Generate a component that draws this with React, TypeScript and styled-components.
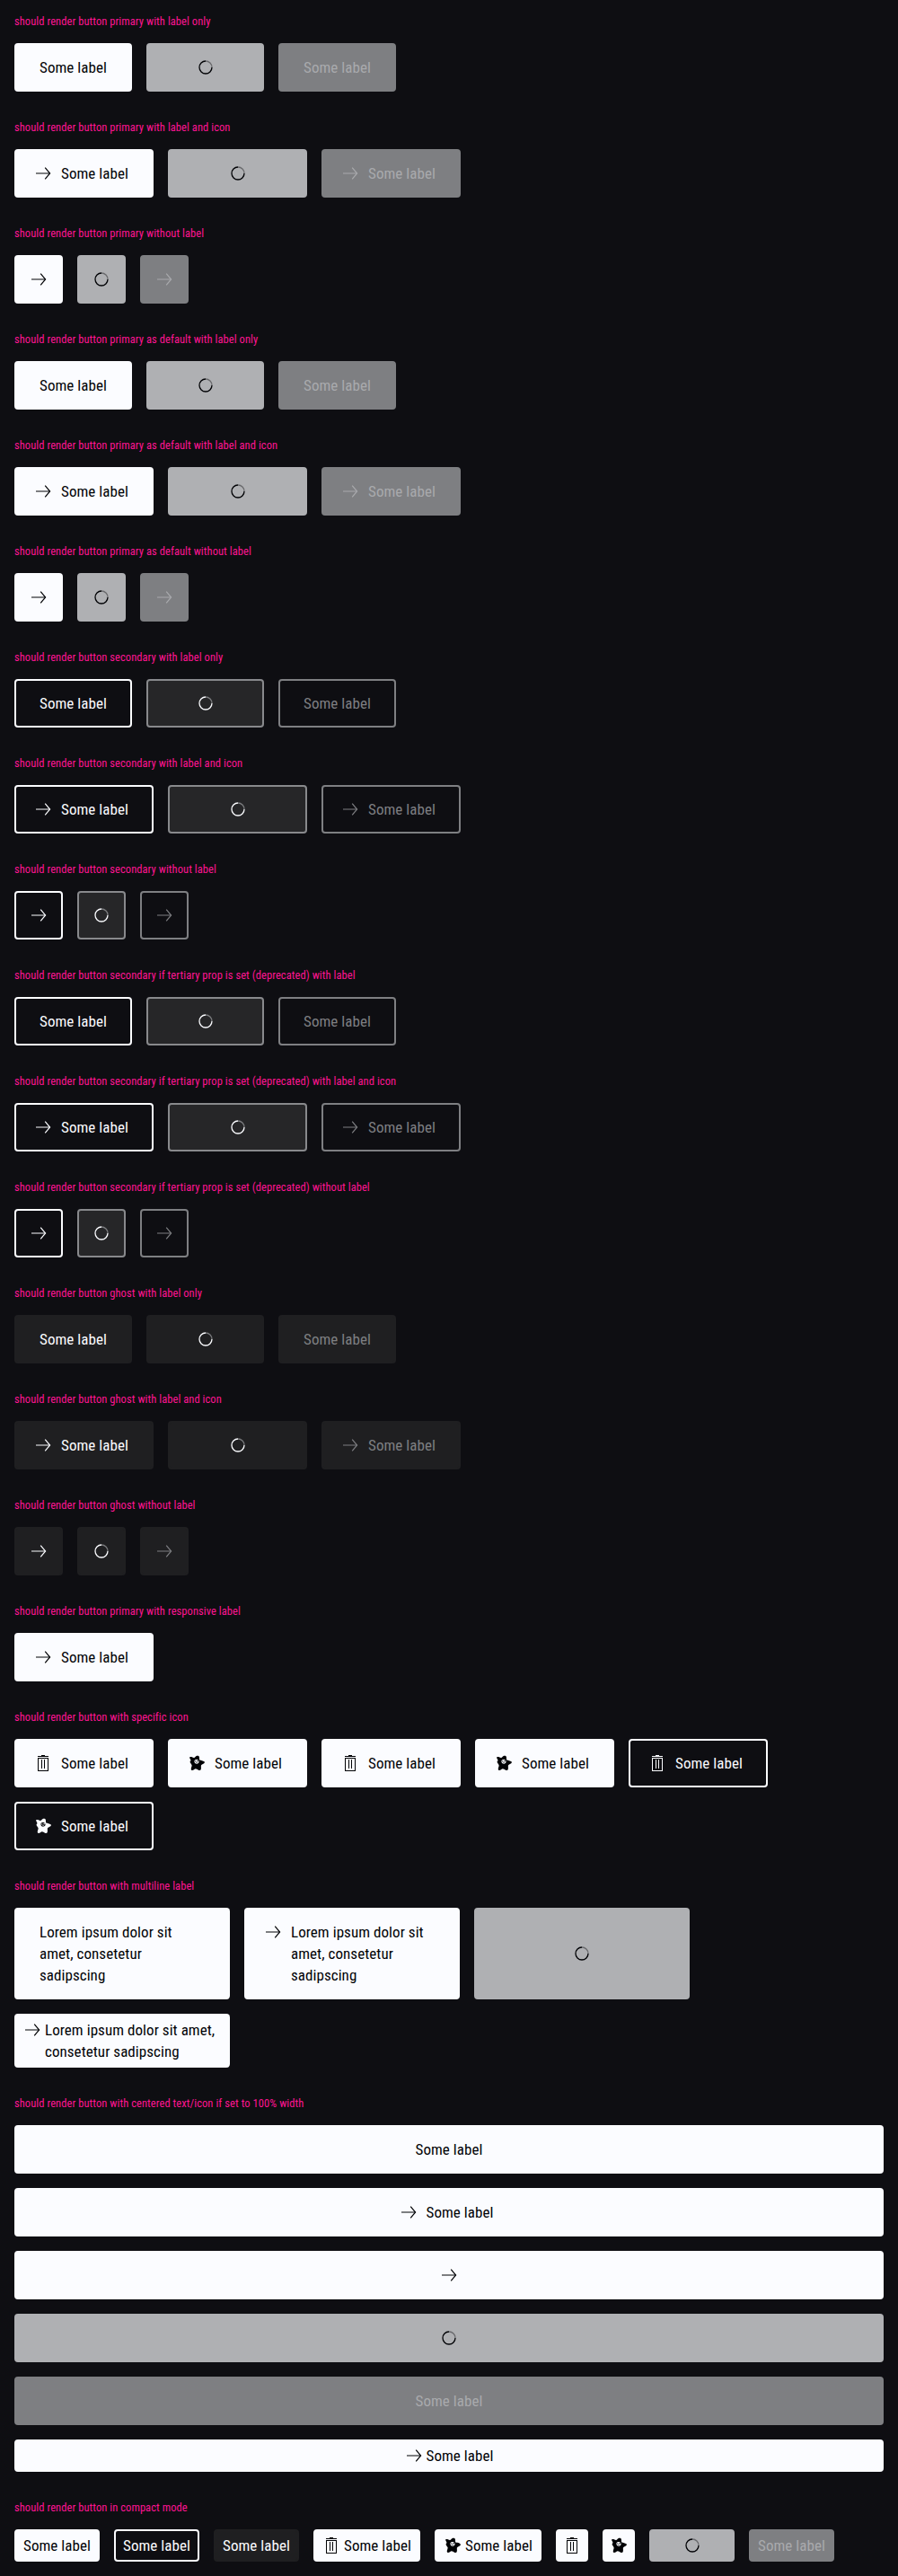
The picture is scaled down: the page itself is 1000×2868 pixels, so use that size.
import React from 'react';
import styled, { createGlobalStyle, css } from 'styled-components';

type Variant = 'primary' | 'secondary' | 'ghost';
type State = 'default' | 'loading' | 'disabled';
type IconName = 'arrow' | 'trash' | 'star';

const palette = {
  canvas: '#0e0e12',
  light: '#fbfcff',
  ink: '#010205',
  caption: '#ff1493',
};

const skins: Record<Variant, Record<State, { bg: string; border: string; fg: string }>> = {
  primary: {
    default: { bg: palette.light, border: palette.light, fg: palette.ink },
    loading: { bg: '#afb0b3', border: '#afb0b3', fg: palette.ink },
    disabled: { bg: '#7e7f82', border: '#7e7f82', fg: '#a9aaad' },
  },
  secondary: {
    default: { bg: 'transparent', border: palette.light, fg: palette.light },
    loading: { bg: '#262628', border: '#88898c', fg: palette.light },
    disabled: { bg: 'transparent', border: '#7e7f82', fg: '#7e7f82' },
  },
  ghost: {
    default: { bg: '#1f1f21', border: '#1f1f21', fg: palette.light },
    loading: { bg: '#1f1f21', border: '#1f1f21', fg: palette.light },
    disabled: { bg: '#1f1f21', border: '#1f1f21', fg: '#7e7f82' },
  },
};

const GlobalStyle = createGlobalStyle`
  *, *::before, *::after { box-sizing: border-box; }
  body {
    margin: 0;
    background: ${palette.canvas};
    font-family: Roboto, "Liberation Sans", sans-serif;
  }
`;

const Page = styled.main`
  display: flex;
  flex-direction: column;
  gap: 32px;
  padding: 16px;
`;

const Section = styled.section`
  display: flex;
  flex-direction: column;
  gap: 16px;
`;

const Caption = styled.h2`
  margin: 0;
  font-size: 12.5px;
  font-weight: 400;
  font-stretch: 75%;
  line-height: 16px;
  letter-spacing: 0.06px;
  white-space: nowrap;
  color: ${palette.caption};
`;

const ButtonRow = styled.div<{ $stacked?: boolean }>`
  display: flex;
  flex-direction: ${(p) => (p.$stacked ? 'column' : 'row')};
  flex-wrap: ${(p) => (p.$stacked ? 'nowrap' : 'wrap')};
  gap: 16px;
`;

const ButtonRoot = styled.button<{
  $variant: Variant;
  $state: State;
  $compact: boolean;
  $iconOnly: boolean;
  $width?: string;
}>`
  display: flex;
  justify-content: center;
  align-items: flex-start;
  margin: 0;
  width: ${(p) => p.$width ?? 'auto'};
  padding: ${(p) => (p.$compact ? (p.$iconOnly ? '4px' : '4px 8px') : p.$iconOnly ? '13px' : '13px 26px')};
  border: 2px solid ${(p) => skins[p.$variant][p.$state].border};
  border-radius: 4px;
  background: ${(p) => skins[p.$variant][p.$state].bg};
  color: ${(p) => skins[p.$variant][p.$state].fg};
  font: inherit;
  font-size: 17px;
  font-weight: 400;
  font-stretch: 75%;
  line-height: 24px;
  letter-spacing: 0.06px;
  text-align: left;
  ${(p) =>
    p.$state === 'loading' &&
    css`
      display: grid;
      place-items: center;
    `}
`;

const Label = styled.span<{ $short: boolean; $hidden?: boolean }>`
  width: ${(p) => (p.$short ? '75px' : 'auto')};
  white-space: nowrap;
  visibility: ${(p) => (p.$hidden ? 'hidden' : 'visible')};
`;

const MultilineLabel = styled(Label)`
  flex: 1;
  white-space: pre;
`;

const IconSlot = styled.span<{ $compact: boolean; $alone: boolean; $hidden?: boolean }>`
  flex: none;
  display: block;
  width: 24px;
  height: 24px;
  margin-left: ${(p) => (p.$alone ? 0 : p.$compact ? -2 : -8)}px;
  margin-right: ${(p) => (p.$alone ? 0 : p.$compact ? 2 : 8)}px;
  visibility: ${(p) => (p.$hidden ? 'hidden' : 'visible')};
`;

/* Label and spinner share one grid cell, so a loading button keeps its width. */
const Ghosted = styled.span`
  grid-area: 1 / 1;
  display: flex;
`;

const SpinnerSlot = styled.span`
  grid-area: 1 / 1;
  width: 24px;
  height: 24px;
`;

const Glyph = styled.svg`
  display: block;
  width: 24px;
  height: 24px;
`;

function Icon({ name }: { name: IconName }) {
  if (name === 'trash') {
    return (
      <Glyph viewBox="0 0 24 24" fill="currentColor">
        <path d="M10 3h4v1h4v1H6V4h4zM6 6h12v15H6zM7 7v13h10V7zM10 8h1v10h-1zM13 8h1v10h-1z" fillRule="evenodd" />
      </Glyph>
    );
  }
  if (name === 'star') {
    return (
      <Glyph viewBox="0 0 24 24" fill="currentColor">
        <path
          fillRule="evenodd"
          d="M4.300 5.200C5.600 4.600 7.600 5.400 9 6.200c1-.2 1.600-1.500 2.800-2.100 1-.5 2.600-.2 3 .8.4 1 0 2.300.400 3.500 1.600.4 4 .8 5.300 1.800.700.600.400 1.500-.3 2.100-1 .9-2.500 1.200-3.300 2.100-.2 1.500.3 3.500-.3 4.900-.4 1-1.600.9-2.500.500-1.200-.5-2.200-1.500-3.200-1.500-1.300.200-2.600 1.800-4 1.700-1.200-.1-1.300-1.300-1-2.500.3-1.300 1-2.500.6-3.500C5.800 12.800 4.500 11.500 4.600 10.300c.1-.6.8-.9.900-1.400C5.400 7.800 3.600 6.300 4.300 5.200zM9.600 9c-.5 1.300 0 3.100 1.400 3.600 1.400.4 3-.3 3.500-1.700.3-1.100-.4-2.200-1.400-2.700-1.300-.6-2.900-.3-3.500.8z"
        />
        <path d="M10.200 9.400h1.200v1.200h-1.200zM12.500 9h1.200v1.200h-1.200zM11.200 11.400h1.800v.6h-1.800z" />
      </Glyph>
    );
  }
  return (
    <Glyph viewBox="0 0 24 24" fill="none" stroke="currentColor">
      <path d="M4 12h15.500" />
      <path d="M14.200 5.700 19.600 12l-5.400 6.300" strokeWidth="1.200" />
    </Glyph>
  );
}

function Spinner() {
  return (
    <Glyph viewBox="0 0 24 24" fill="none" stroke="currentColor" strokeWidth="1.300">
      <path d="M12 5a7 7 0 1 0 7 7" />
      <path d="M12 5a7 7 0 0 1 7 7" opacity="0.4" />
    </Glyph>
  );
}

interface ButtonProps {
  variant?: Variant;
  state?: State;
  icon?: IconName;
  label?: string;
  compact?: boolean;
  width?: string;
}

function Button({ variant = 'primary', state = 'default', icon, label, compact = false, width }: ButtonProps) {
  const multiline = !!label && label.includes('\n');
  const LabelTag = multiline ? MultilineLabel : Label;
  const content = (
    <>
      {icon && (
        <IconSlot $compact={compact} $alone={!label} $hidden={state === 'loading'}>
          <Icon name={icon} />
        </IconSlot>
      )}
      {label && (
        <LabelTag $short={!multiline} $hidden={state === 'loading'}>
          {label}
        </LabelTag>
      )}
    </>
  );
  return (
    <ButtonRoot
      type="button"
      $variant={variant}
      $state={state}
      $compact={compact}
      $iconOnly={!label}
      $width={width}
    >
      {state === 'loading' ? (
        <>
          <Ghosted aria-hidden>{content}</Ghosted>
          <SpinnerSlot>
            <Spinner />
          </SpinnerSlot>
        </>
      ) : (
        content
      )}
    </ButtonRoot>
  );
}

const TEXT = 'Some label';
const LOREM = 'Lorem ipsum dolor sit\namet, consetetur\nsadipscing';
const LOREM_COMPACT = 'Lorem ipsum dolor sit amet,\nconsetetur sadipscing';
const STATES: State[] = ['default', 'loading', 'disabled'];

const groups: { name: string; variant: Variant; first?: string }[] = [
  { name: 'primary', variant: 'primary' },
  { name: 'primary as default', variant: 'primary' },
  { name: 'secondary', variant: 'secondary' },
  { name: 'secondary if tertiary prop is set (deprecated)', variant: 'secondary', first: 'with label' },
  { name: 'ghost', variant: 'ghost' },
];

const kinds: { suffix: string; label?: string; icon?: IconName }[] = [
  { suffix: 'with label only', label: TEXT },
  { suffix: 'with label and icon', label: TEXT, icon: 'arrow' },
  { suffix: 'without label', icon: 'arrow' },
];

export default function App() {
  return (
    <Page>
      <GlobalStyle />
      {groups.map((group) =>
        kinds.map((kind, index) => (
          <Section key={group.name + kind.suffix}>
            <Caption>
              {`should render button ${group.name} ${index === 0 && group.first ? group.first : kind.suffix}`}
            </Caption>
            <ButtonRow>
              {STATES.map((state) => (
                <Button key={state} variant={group.variant} state={state} label={kind.label} icon={kind.icon} />
              ))}
            </ButtonRow>
          </Section>
        )),
      )}
      <Section>
        <Caption>should render button primary with responsive label</Caption>
        <ButtonRow>
          <Button icon="arrow" label={TEXT} />
        </ButtonRow>
      </Section>
      <Section>
        <Caption>should render button with specific icon</Caption>
        <ButtonRow>
          <Button icon="trash" label={TEXT} />
          <Button icon="star" label={TEXT} />
          <Button icon="trash" label={TEXT} />
          <Button icon="star" label={TEXT} />
          <Button variant="secondary" icon="trash" label={TEXT} />
          <Button variant="secondary" icon="star" label={TEXT} />
        </ButtonRow>
      </Section>
      <Section>
        <Caption>should render button with multiline label</Caption>
        <ButtonRow>
          <Button label={LOREM} width="240px" />
          <Button icon="arrow" label={LOREM} width="240px" />
          <Button state="loading" label={LOREM} width="240px" />
          <Button compact icon="arrow" label={LOREM_COMPACT} width="240px" />
        </ButtonRow>
      </Section>
      <Section>
        <Caption>should render button with centered text/icon if set to 100% width</Caption>
        <ButtonRow $stacked>
          <Button width="100%" label={TEXT} />
          <Button width="100%" icon="arrow" label={TEXT} />
          <Button width="100%" icon="arrow" />
          <Button width="100%" state="loading" label={TEXT} />
          <Button width="100%" state="disabled" label={TEXT} />
          <Button width="100%" compact icon="arrow" label={TEXT} />
        </ButtonRow>
      </Section>
      <Section>
        <Caption>should render button in compact mode</Caption>
        <ButtonRow>
          <Button compact label={TEXT} />
          <Button compact variant="secondary" label={TEXT} />
          <Button compact variant="ghost" label={TEXT} />
          <Button compact icon="trash" label={TEXT} />
          <Button compact icon="star" label={TEXT} />
          <Button compact icon="trash" />
          <Button compact icon="star" />
          <Button compact state="loading" label={TEXT} />
          <Button compact state="disabled" label={TEXT} />
        </ButtonRow>
      </Section>
    </Page>
  );
}
